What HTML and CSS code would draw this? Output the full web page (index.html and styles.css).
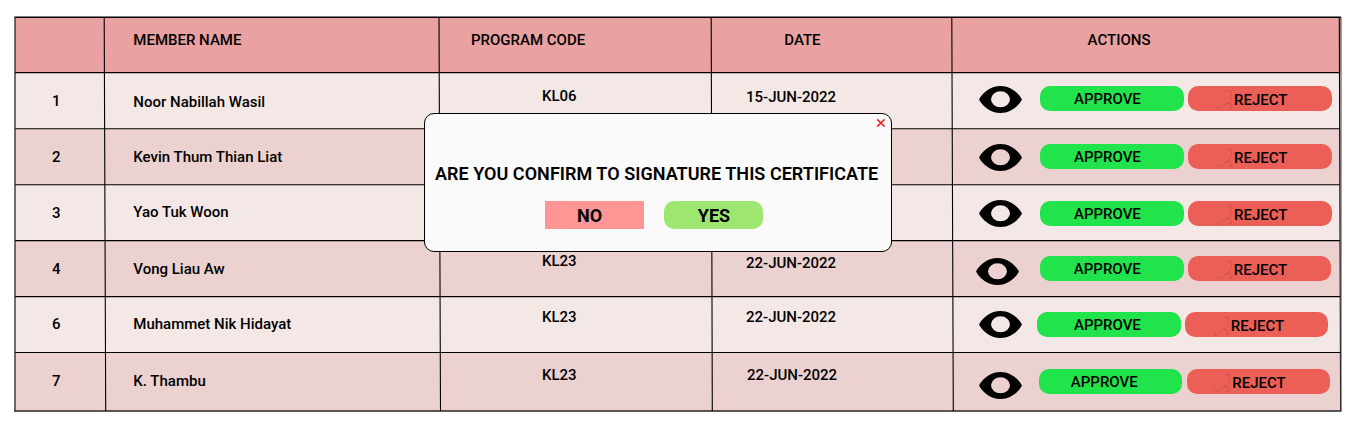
FILE: index.html
```
<!DOCTYPE html>
<html lang="en">
<head>
<meta charset="utf-8">
<title>Certificates</title>
<link rel="stylesheet" href="styles.css">
</head>
<body>
<svg class="defs" width="0" height="0">
  <symbol id="eye" viewBox="0 0 43 27"><path fill-rule="evenodd" d="M0 13.5C4 6.200 12 0 21.500 0S39 6.200 43 13.500C39 20.800 31 27 21.500 27S4 20.800 0 13.500ZM12 13.300a9.500 8 0 1 0 19 0a9.500 8 0 1 0-19 0Z"/></symbol>
  <symbol id="sketch" viewBox="0 0 18 20"><path d="M11.500 1.500L15 1L15.500 8L13 12L8 15L4 18.500L1.500 19L1 17M11 14L14 13.500L16 18L12.500 18.500" fill="none" stroke="#8c3029" stroke-width=".7" stroke-dasharray="1 1.500" opacity=".85"/></symbol>
</svg>
<main class="board">
  <section class="table">
    <div class="row head"><b></b><span class="name">MEMBER NAME</span><span class="code">PROGRAM CODE</span><span class="date">DATE</span><span class="actions-title">ACTIONS</span></div>
    <div class="row r1"><span class="num">1</span><span class="name">Noor Nabillah Wasil</span><span class="code">KL06</span><span class="date">15-JUN-2022</span><div class="actions"><svg class="eye"><use href="#eye"/></svg><button class="approve">APPROVE</button><button class="reject"><svg class="sketch"><use href="#sketch"/></svg>REJECT</button></div></div>
    <div class="row r2 dark"><span class="num">2</span><span class="name">Kevin Thum Thian Liat</span><span class="code"></span><span class="date"></span><div class="actions"><svg class="eye"><use href="#eye"/></svg><button class="approve">APPROVE</button><button class="reject"><svg class="sketch"><use href="#sketch"/></svg>REJECT</button></div></div>
    <div class="row r3"><span class="num">3</span><span class="name">Yao Tuk Woon</span><span class="code"></span><span class="date"></span><div class="actions"><svg class="eye"><use href="#eye"/></svg><button class="approve">APPROVE</button><button class="reject"><svg class="sketch"><use href="#sketch"/></svg>REJECT</button></div></div>
    <div class="row r4 dark"><span class="num">4</span><span class="name">Vong Liau Aw</span><span class="code">KL23</span><span class="date">22-JUN-2022</span><div class="actions"><svg class="eye"><use href="#eye"/></svg><button class="approve">APPROVE</button><button class="reject"><svg class="sketch"><use href="#sketch"/></svg>REJECT</button></div></div>
    <div class="row r5"><span class="num">6</span><span class="name">Muhammet Nik Hidayat</span><span class="code">KL23</span><span class="date">22-JUN-2022</span><div class="actions"><svg class="eye"><use href="#eye"/></svg><button class="approve">APPROVE</button><button class="reject"><svg class="sketch"><use href="#sketch"/></svg>REJECT</button></div></div>
    <div class="row r6 dark"><span class="num">7</span><span class="name">K. Thambu</span><span class="code">KL23</span><span class="date">22-JUN-2022</span><div class="actions"><svg class="eye"><use href="#eye"/></svg><button class="approve">APPROVE</button><button class="reject"><svg class="sketch"><use href="#sketch"/></svg>REJECT</button></div></div>
  </section>
  <svg class="rules" viewBox="0 0 1356 426">
    <path d="M14.500 17.300H1341M15 72.600H1339.500" stroke-width="1.400"/>
    <path d="M15 128.700H1340M15 184.700H1340M15 240.600H1340M15 296.600H1340M15 352.500H1340" stroke-width="1.100"/>
    <path d="M14 411H1341.500M15 17V411" stroke-width="1.300" stroke="#2b2629"/>
    <path d="M104.200 17L105.700 411M439 17L440.500 411M711.200 17L712.300 411M951.800 17L953.300 411M1339.300 17L1340.600 411" stroke-width="1.100"/>
    <path d="M1341 17V411" stroke-width="1.100" stroke="#554d50"/>
  </svg>
  <section class="dialog">
    <svg class="close" viewBox="0 0 10 10"><path d="M1.200 1.400L8.600 8.600M8.600 1.400L1.200 8.600"/></svg>
    <h1>ARE YOU CONFIRM TO SIGNATURE THIS CERTIFICATE</h1>
    <div class="choices"><button class="no">NO</button><button class="yes">YES</button></div>
  </section>
</main>
</body>
</html>
```
FILE: styles.css
```
* { box-sizing: border-box; }
body { margin: 0; background: #fff; color: #000; font: 500 15px/20px Roboto, sans-serif; }
.defs { position: absolute; }
.board { position: relative; width: 1356px; height: 426px; padding: 17px 15px 0; overflow: hidden; }
.table { width: 1326px; }
.row { display: grid; grid-template-columns: 90px 334px 273px 241px 388px; height: 56px; background: #f4e8e7; white-space: nowrap; }
.row.dark { background: #ebd1d0; }
.row.head { background: #e9a1a1; }
.row.r6 { height: 58px; }
.num { padding: 18px 0 0 37px; }
.name { padding: 18px 0 0 28.300px; }
.code { padding: 13px 0 0 103px; }
.date { padding: 14px 0 0 34px; }
.head span { padding-top: 13px; }
.head .code { padding-left: 32px; }
.head .date { padding-left: 72.300px; }
.actions-title { padding-left: 134.600px; }
.r1 .name { padding-top: 19px; }
.r3 .name { padding-top: 17px; }
.r5 .num { padding-top: 17px; }
.r5 .name { padding-top: 17px; }
.r4 .code { padding-top: 10px; }
.r4 .date { padding-top: 12px; }
.r5 .code, .r5 .date { padding-top: 10px; }
.r6 .code { padding-top: 12px; }
.r6 .date { padding: 12px 0 0 35px; }

.actions { display: flex; align-items: flex-start; padding: 13px 0 0 26.300px; }
.eye { width: 43px; height: 27px; flex: none; }
button { border: 0; color: #000; font: inherit; }
.approve, .reject { display: flex; align-items: center; flex: none; width: 143.300px; height: 25px; padding: 0 0 0 33.500px; border-radius: 10px; }
.approve { margin-left: 18.200px; background: #21e34b; }
.reject { margin-left: 4.500px; padding: 2px 0 0 27.700px; background: #ec5f57; }
.sketch { width: 18px; height: 20px; flex: none; }
.r2 .actions { padding-top: 15.300px; }
.r3 .actions { padding-top: 15.300px; }
.r3 .eye { margin-top: -.3px; }
.r3 .approve, .r3 .reject { margin-top: 1px; }
.r4 .actions { padding: 15.300px 0 0 23.300px; }
.r4 .eye { margin-top: 2px; }
.r4 .approve { margin-left: 21px; }
.r5 .actions { padding-top: 14px; }
.r5 .approve, .r5 .reject { margin-top: 1.300px; }
.r5 .approve { margin-left: 15px; padding-left: 36.700px; }
.r6 .actions { padding-top: 16.300px; }
.r6 .eye { margin-top: 3px; }
.r6 .approve { margin-left: 16.500px; padding-left: 32px; }

.rules { position: absolute; inset: 0; width: 1356px; height: 426px; fill: none; stroke: #000; }

.dialog { position: absolute; left: 424px; top: 113px; width: 468px; height: 139px; padding: 48px 0 0; background: #fafafa; border: 1px solid #000; border-radius: 10px; }
.dialog h1 { margin: 0 0 0 10px; font: 600 18px/24px Roboto, sans-serif; letter-spacing: .035px; white-space: nowrap; }
.close { position: absolute; top: 4px; right: 5px; width: 10px; height: 10px; stroke: #e62b2b; stroke-width: 1.600; }
.choices { display: flex; gap: 20px; padding: 15px 0 0 120px; }
.choices button { display: flex; align-items: center; justify-content: center; width: 99px; height: 28px; padding: 1px 10px 0 0; font: 700 18px/24px Roboto, sans-serif; }
.no { background: #ff9696; }
.yes { background: #9de770; border-radius: 10px; }
.choices .yes { padding: 1px 0 0 1px; }
```
